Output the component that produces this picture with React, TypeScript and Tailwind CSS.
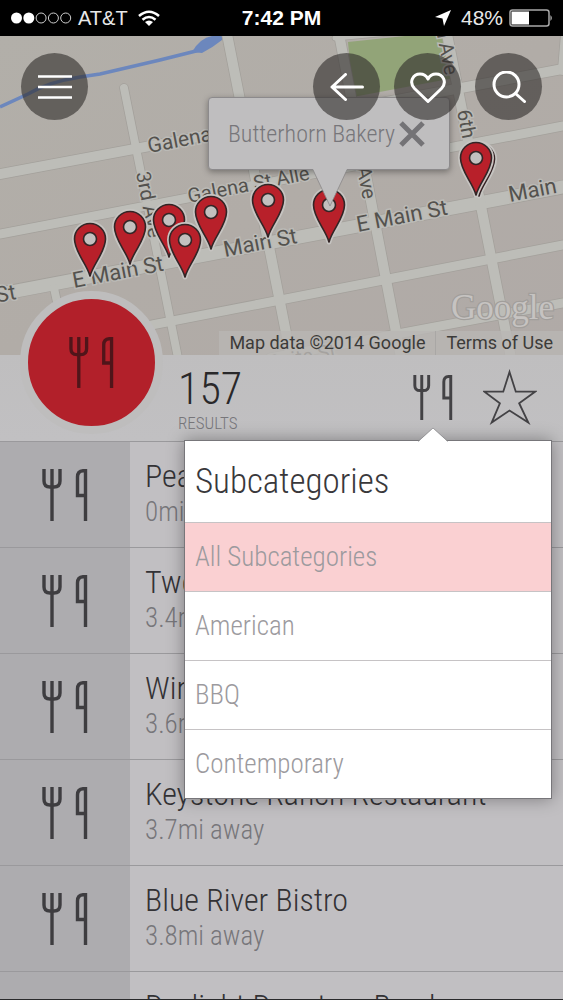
import React from "react";

const narrow = "font-['Roboto_Condensed','Arial_Narrow',sans-serif] font-light";

function Utensils({ className }: { className?: string }) {
  return (
    <svg viewBox="0 0 46 52" fill="none" stroke="currentColor" strokeWidth="3.400" className={className} aria-hidden="true">
      <path d="M2 0V12Q2 18 8 18H12Q18 18 18 12V0" />
      <path d="M10 0V52" />
      <path d="M43.500 52V1.700H41Q35.500 2 35.500 8V26.500H43.500" />
    </svg>
  );
}

function Pin({ x, y }: { x: number; y: number }) {
  const d = "M0 37C-3 25-15.500 13-15.500 0A15.500 15.500 0 0 1 15.500 0C15.500 13 3 25 0 37Z";
  return (
    <g transform={`translate(${x} ${y})`}>
      <path d={d} fill="none" stroke="#c6c4c1" strokeWidth="5" strokeLinejoin="round" />
      <path d={d} fill="#b8202a" stroke="#332526" strokeWidth="1.600" strokeLinejoin="round" />
      <circle r="6.500" fill="#c3c0bf" stroke="#332526" strokeWidth="1.600" />
    </g>
  );
}

const roads: { d: string; w: number }[] = [
  { d: "M0 174L563 69", w: 10 },
  { d: "M0 234L563 126", w: 9 },
  { d: "M0 294L563 187", w: 13 },
  { d: "M90 337L563 245", w: 9 },
  { d: "M270 358L563 303", w: 9 },
  { d: "M124 88L178 358", w: 8 },
  { d: "M227 34L291 358", w: 10 },
  { d: "M339 34L401 358", w: 10 },
  { d: "M447 34L511 358", w: 10 },
  { d: "M54 288L69 358", w: 8 },
  { d: "M566 34L563 70", w: 10 },
  { d: "M335 38L400 32", w: 5 },
];

const labels: { t: string; x: number; y: number; r: number; s: number; end?: boolean }[] = [
  { t: "Galena St", x: 149, y: 153, r: -11, s: 21 },
  { t: "Galena St Alle", x: 189, y: 203, r: -11, s: 20 },
  { t: "E Main St", x: 74, y: 288, r: -11, s: 22 },
  { t: "Main St", x: 225, y: 257, r: -11, s: 22 },
  { t: "E Main St", x: 358, y: 232, r: -11, s: 22 },
  { t: "Main", x: 510, y: 202, r: -11, s: 22 },
  { t: "St", x: 17, y: 299, r: -11, s: 22, end: true },
  { t: "3rd Ave", x: 136, y: 173, r: 79, s: 20 },
  { t: "Ave", x: 363, y: 200, r: 79, s: 20, end: true },
  { t: "n Ave", x: 445, y: 76, r: 79, s: 20, end: true },
  { t: "6th", x: 457, y: 111, r: 79, s: 20 },
  { t: "Suite St", x: 270, y: 370, r: -11, s: 20 },
];

const pins = [
  [90, 239], [130, 227], [169, 220], [211, 212], [185, 240], [268, 200], [329, 205],
];

function StreetMap() {
  return (
    <svg
      viewBox="0 36 563 319"
      preserveAspectRatio="xMidYMid slice"
      className="block h-full w-full"
      role="img"
      aria-label="Map of results along Main St"
    >
      <defs>
        <linearGradient id="land" x1="0" y1="0" x2="1" y2="1">
          <stop offset="0" stopColor="#b2afa9" />
          <stop offset="0.500" stopColor="#b1aca7" />
          <stop offset="1" stopColor="#b0aaa7" />
        </linearGradient>
      </defs>
      <rect x="0" y="36" width="563" height="319" fill="url(#land)" />
      <path d="M348 42L443 32L454 78L353 97Z" fill="#92a478" />
      <path d="M0 107L28 94Q48 82 80 77L100 74L160 60L200 50" fill="none" stroke="#6c87bd" strokeWidth="3.500" />
      <path d="M192 52Q200 38 212 36H222V40Q212 48 202 53Z" fill="#6c87bd" />
      <g fill="none" stroke="#a3a09b" strokeLinecap="round">
        {roads.map((r) => <path key={r.d} d={r.d} strokeWidth={r.w + 1.500} />)}
      </g>
      <g fill="none" stroke="#bdbdb8" strokeLinecap="round">
        {roads.map((r) => <path key={r.d} d={r.d} strokeWidth={r.w} />)}
      </g>
      <g fill="#54524e" stroke="#bbbab6" strokeWidth="3" paintOrder="stroke" className="font-[Roboto,sans-serif] font-normal">
        {labels.map((l, i) => (
          <text
            key={i}
            fontSize={l.s}
            textAnchor={l.end ? "end" : "start"}
            transform={`translate(${l.x} ${l.y}) rotate(${l.r})`}
          >
            {l.t}
          </text>
        ))}
      </g>
      <g fontSize="35" className="font-['Liberation_Serif',serif] font-normal">
        <text x="451" y="319" fill="#c6c3c1" stroke="#a19e9b" strokeWidth="2.500" paintOrder="stroke">
          Google
        </text>
      </g>
      {pins.map(([x, y]) => <Pin key={`${x}-${y}`} x={x} y={y} />)}
      <Pin x={479} y={159} />
      <Pin x={476} y={158} />
    </svg>
  );
}

function RoundButton({ label, children }: { label: string; children: React.ReactNode }) {
  return (
    <button
      type="button"
      aria-label={label}
      className="flex size-[67px] items-center justify-center rounded-full bg-[#2e2c29]/60 text-white"
    >
      {children}
    </button>
  );
}

function StatusBar() {
  return (
    <header className="grid h-9 shrink-0 grid-cols-[1fr_auto_1fr] items-center bg-black px-[10px] font-['Liberation_Sans',sans-serif] text-[20px] leading-6 font-normal text-[#e8e8e8]">
      <div className="flex items-center gap-[6px]">
        <svg viewBox="0 0 62 12" className="h-3 w-[62px]" aria-hidden="true">
          {[0, 1, 2, 3, 4].map((i) => (
            <circle
              key={i}
              cx={6.500 + i * 12.300}
              cy="6"
              r={i < 2 ? 5.500 : 5}
              fill={i < 2 ? "#fff" : "none"}
              stroke={i < 2 ? "none" : "#cfcfcf"}
            />
          ))}
        </svg>
        <span>AT&amp;T</span>
        <svg viewBox="0 0 22 16" className="ml-1 h-4 w-[22px]" fill="none" stroke="#fff" strokeWidth="2.600" aria-hidden="true">
          <path d="M1 6Q11-2.500 21 6" />
          <path d="M4.500 9.800Q11 4.200 17.500 9.800" />
          <path d="M11 16L7 12Q11 8.800 15 12Z" fill="#fff" stroke="none" />
        </svg>
      </div>
      <span className="text-[21px] font-bold text-white">7:42 PM</span>
      <div className="flex items-center justify-end gap-[6px]">
        <svg viewBox="0 0 16 16" className="mr-1 size-4" fill="#fff" aria-hidden="true">
          <path d="M16 0L9 16L7.500 8.500L0 7Z" />
        </svg>
        <span className="text-[21px]">48%</span>
        <svg viewBox="0 0 44 18" className="h-[18px] w-11" fill="none" aria-hidden="true">
          <rect x="1" y="1" width="39" height="16" rx="2.500" stroke="#a9a9a9" strokeWidth="1.500" />
          <rect x="2.500" y="2.500" width="17.500" height="13" fill="#fff" />
          <path d="M41.500 6Q44 9 41.500 12Z" fill="#c9c9c9" />
        </svg>
      </div>
    </header>
  );
}

const places = [
  { name: "Peak Provisions", distance: "0mi away" },
  { name: "Two Below Zero", distance: "3.4mi away" },
  { name: "Wine and Dine", distance: "3.6mi away" },
  { name: "Keystone Ranch Restaurant", distance: "3.7mi away" },
  { name: "Blue River Bistro", distance: "3.8mi away" },
  { name: "Daylight Donuts – Breck", distance: "3.9mi away" },
];

const subcategories = ["All Subcategories", "American", "BBQ", "Contemporary"];

export default function App() {
  return (
    <div className={`flex h-screen flex-col overflow-hidden border-b border-[#2a2a2c] bg-[#c1bfc2] ${narrow}`}>
      <StatusBar />

      <section className="relative h-[319px] shrink-0 overflow-hidden">
        <StreetMap />

        <div className="absolute top-[61px] left-1/2 -ml-[74px]">
          <div className="flex h-[73px] w-[242px] items-center justify-center gap-1 rounded-sm border border-[#8c8a8c] bg-[#bfbebf] pr-[4px] text-[24px] leading-8 text-[#77767a] shadow-[0_2px_6px_rgba(0,0,0,0.35)]">
            <span className="whitespace-nowrap">Butterhorn Bakery</span>
            <button type="button" aria-label="Close">
              <svg viewBox="0 0 26 26" className="block size-[26px]" stroke="#747376" strokeWidth="5" aria-hidden="true">
                <path d="M2 2L24 24M24 2L2 24" />
              </svg>
            </button>
          </div>
          <svg viewBox="0 0 34 38" className="absolute top-[72px] left-[105px] h-[38px] w-[34px]" aria-hidden="true">
            <path d="M0 0H34L17 37Z" fill="#bfbebf" />
            <path d="M0 1L17 37L34 1" fill="none" stroke="#8c8a8c" strokeWidth="0.800" />
          </svg>
        </div>

        <nav className="absolute inset-x-0 top-[17px] flex justify-between px-[21px]">
          <RoundButton label="Menu">
            <svg viewBox="0 0 34 24" className="h-6 w-[34px]" stroke="currentColor" strokeWidth="2.600" aria-hidden="true">
              <path d="M0 1.500H34M0 12H34M0 22.500H34" />
            </svg>
          </RoundButton>
          <div className="flex gap-[14px]">
            <RoundButton label="Back">
              <svg viewBox="0 0 34 28" className="h-7 w-[34px]" fill="none" stroke="currentColor" strokeWidth="3" strokeLinecap="round" strokeLinejoin="round" aria-hidden="true">
                <path d="M32.500 14H2M15.500 1.500L2 14L15.500 26.500" />
              </svg>
            </RoundButton>
            <RoundButton label="Favourites">
              <svg viewBox="0 0 36 32" className="mt-[3px] h-8 w-9" fill="none" stroke="currentColor" strokeWidth="3" strokeLinejoin="round" aria-hidden="true">
                <path d="M18 29.500L4.500 16.500C-1.500 10 3 2 10 2C14 2 16.500 4 18 7C19.500 4 22 2 26 2C33 2 37.500 10 31.500 16.500Z" />
              </svg>
            </RoundButton>
            <RoundButton label="Search">
              <svg viewBox="0 0 34 32" className="h-8 w-[34px]" fill="none" stroke="currentColor" strokeWidth="3" strokeLinecap="round" aria-hidden="true">
                <circle cx="14.500" cy="13.500" r="12.500" />
                <path d="M23.500 22.500L32.500 30.500" />
              </svg>
            </RoundButton>
          </div>
        </nav>

        <div className="absolute right-0 bottom-0 flex items-center gap-[10px] bg-[#b9b7b4]/80 px-[10px] font-[Roboto,sans-serif] text-[18px] leading-6 font-normal text-[#3c3b39]">
          <span>Map data ©2014 Google</span>
          <a href="#terms" className="border-l border-[#a9a7a5] pl-[10px]">Terms of Use</a>
        </div>
      </section>

      <section className="relative flex h-[86px] shrink-0 items-start bg-gradient-to-b from-[#bfbebf] to-[#c1c0c2] pl-5">
        <div className="relative -mt-[64px] flex size-[143px] shrink-0 items-center justify-center rounded-full border-8 border-[#bebdbd] bg-[#b2202a]">
          <Utensils className="h-[51px] w-[45px] text-[#50151a]" />
        </div>
        <div className="flex flex-1 flex-col pt-3 pl-[15px]">
          <span className="text-[44px] leading-[44px] text-[#29282a]">157</span>
          <span className="text-[17px] leading-6 text-[#77767a]">RESULTS</span>
        </div>
        <div className="flex gap-[30px] pt-[14px] pr-[26px] text-[#434245]">
          <button type="button" aria-label="Filter by subcategory" aria-expanded="true" className="flex h-14 items-center">
            <Utensils className="h-[45px] w-10" />
          </button>
          <button type="button" aria-label="Save search" className="h-14">
            <svg viewBox="-1 -2 56 58" className="h-14 w-[54px]" fill="none" stroke="currentColor" strokeWidth="1.900" aria-hidden="true">
              <path d="M26.500 1L33 21.500H53L36.500 33.500L46 53.500L26.500 41L8 53.500L16.500 33.500L0.500 21.500H20Z" />
            </svg>
          </button>
        </div>

        <div className="absolute top-[85px] right-[11px] z-10 w-[368px] border border-[#77767a] bg-white shadow-[0_0_16px_rgba(0,0,0,0.35)]">
          <svg viewBox="0 0 30 15" className="absolute -top-[14px] right-[103px] h-[15px] w-[30px]" aria-hidden="true">
            <path d="M0 15L15 1L30 15Z" fill="#fff" />
            <path d="M0 14.500L15 1L30 14.500" fill="none" stroke="#8c8b8e" strokeWidth="0.800" />
          </svg>
          <h2 className="flex h-[81px] items-center px-[10px] text-[35px] leading-10 text-[#39383b]">Subcategories</h2>
          <ul>
            {subcategories.map((s, i) => (
              <li key={s} className="border-t border-[#c6c3c5]">
                <button
                  type="button"
                  className={`flex h-[68px] w-full items-center px-[10px] text-left text-[27px] leading-8 text-[#9c9a9e] ${i === 0 ? "bg-[#fad0d2]" : "bg-white"}`}
                >
                  {s}
                </button>
              </li>
            ))}
          </ul>
        </div>
      </section>

      <ul className="min-h-0 flex-1 overflow-hidden">
        {places.map((p) => (
          <li key={p.name} className="flex h-[106px] border-t border-[#9a999c]">
            <div className="flex w-[130px] shrink-0 items-center justify-center bg-[#adacaf] text-[#3e3d40]">
              <Utensils className="h-[52px] w-[46px]" />
            </div>
            <div className="flex min-w-0 flex-1 flex-col justify-center pb-[6px] pl-[15px]">
              <span className="truncate text-[32px] leading-10 text-[#333235]">{p.name}</span>
              <span className="text-[27px] leading-8 text-[#77767a]">{p.distance}</span>
            </div>
          </li>
        ))}
      </ul>
    </div>
  );
}
